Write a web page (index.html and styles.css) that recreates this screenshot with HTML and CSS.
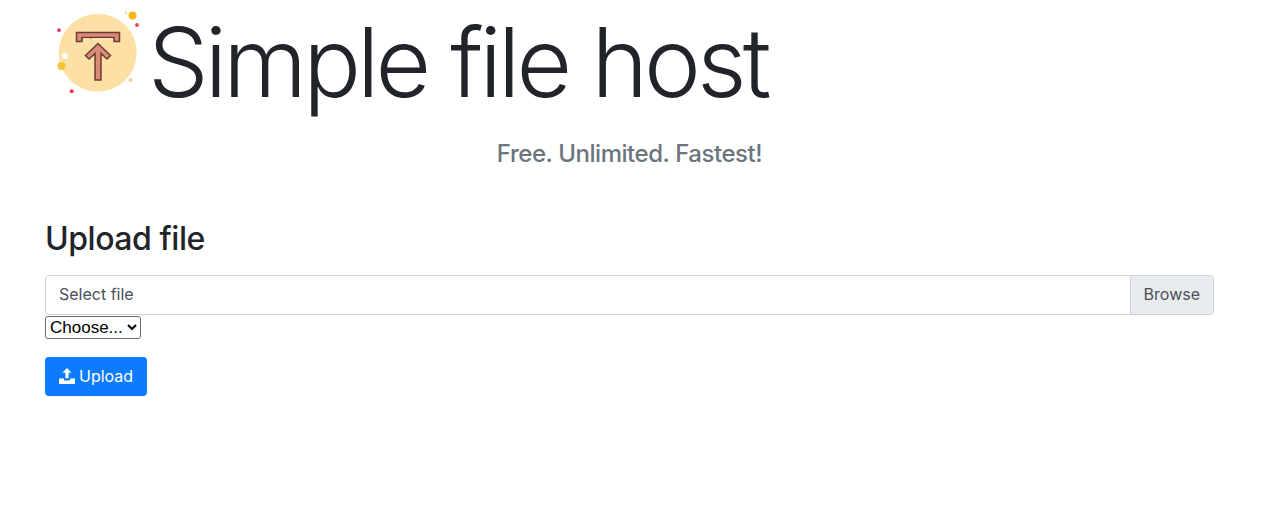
FILE: index.html
```html
<!DOCTYPE html>
<html>

<head>
    <meta charset="UTF-8">
    <title>Simple file host</title>
    <link rel="stylesheet" href="styles.css">
</head>

<body>
<div class="container">
    <h1 class="title">
        <svg class="logo" viewBox="50 8 92 92" width="92" height="92">
            <circle cx="97.700" cy="52.700" r="39" fill="#fde0a6"/>
            <circle cx="132.500" cy="15.500" r="4" fill="#f2b81f"/>
            <circle cx="126" cy="13" r="1.200" fill="#f5d98a"/>
            <circle cx="137" cy="25" r="2" fill="#e8476a"/>
            <circle cx="59" cy="30.300" r="2" fill="#e0457a"/>
            <circle cx="61.500" cy="66" r="4" fill="#f6c435"/>
            <circle cx="65" cy="56" r="3" fill="#fff"/>
            <circle cx="67" cy="70" r="1.200" fill="#f6d88c"/>
            <circle cx="71.700" cy="91.300" r="2" fill="#e8384f"/>
            <circle cx="130.500" cy="80" r="2" fill="#f5d48a"/>
            <path d="M76.500 32.500h43v9h-5.500v-4h-32v4h-5.500z" fill="#d98b78" stroke="#6e3b32" stroke-width="1.500"/>
            <path d="M84 38.800h5M92 38.800h21" fill="none" stroke="#fff3d6" stroke-width="1"/>
            <path d="M98 43.500l12.500 12-3.500 3.500-6-5.500v26.500h-6v-26.500l-6 5.500-3.500-3.500z" fill="#d98b78" stroke="#6e3b32" stroke-width="1.500"/>
        </svg>Simple file host
    </h1>
    <p class="lead">Free. Unlimited. Fastest!</p>

    <h3 class="upload-title">Upload file</h3>
    <div class="file-group">
        <div class="file-label">Select file</div>
        <div class="file-browse">Browse</div>
    </div>
    <select class="server-select">
        <option>Choose...</option>
    </select>
    <div>
        <button class="btn-upload">
            <svg class="icon-upload" viewBox="0 0 16 16" width="16" height="16">
                <path d="M8 0l4.600 4.800H9.600v5.400H6.400V4.800H3.400z" fill="#fff"/>
                <path d="M0 10.600h5v.8c0 .8.500 1.200 1.200 1.200h3.600c.7 0 1.200-.4 1.200-1.200v-.8h5V16H0z" fill="#fff"/>
            </svg>
            Upload
        </button>
    </div>
</div>
</body>

</html>
```

FILE: styles.css
```css
* {
    box-sizing: border-box;
}

body {
    margin: 0;
    font-family: Inter, "Liberation Sans", sans-serif;
    color: #212529;
    background: #fff;
}

.container {
    width: 1260px;
    padding: 0 46px 0 45px;
}

.title {
    display: flex;
    align-items: flex-start;
    height: 124px;
    margin: 0;
    padding-left: 5px;
    font-size: 96px;
    font-weight: 300;
    line-height: 124px;
    letter-spacing: -3.900px;
    white-space: nowrap;
}

.logo {
    flex: none;
    margin: 8px 6px 0 0;
}

.lead {
    margin: 14px 0 0;
    font-size: 24px;
    font-weight: 500;
    line-height: 32px;
    letter-spacing: -0.450px;
    text-align: center;
    color: #6c757d;
}

.upload-title {
    margin: 49px 0 0;
    font-size: 32px;
    font-weight: 500;
    line-height: 40px;
    letter-spacing: -0.450px;
}

.file-group {
    display: flex;
    width: 1169px;
    height: 39.500px;
    margin-top: 16px;
    border: 1px solid #d0d3d6;
    border-radius: 4px;
    font-size: 16px;
    line-height: 37.500px;
    color: #495057;
}

.file-label {
    flex: 1;
    padding-left: 13px;
}

.file-browse {
    padding: 0 13px;
    background: #e9ecef;
    border-left: 1px solid #d0d3d6;
    border-radius: 0 3px 3px 0;
}

.server-select {
    display: block;
    width: 96px;
    height: 23px;
    margin-top: 1px;
    font-family: "Liberation Sans", sans-serif;
    font-size: 17px;
    color: #000;
    background: #fff;
    border: 1px solid #6b6b6b;
    border-radius: 3px;
}

.btn-upload {
    display: flex;
    align-items: center;
    gap: 4px;
    height: 39.500px;
    margin-top: 18px;
    padding: 0 14px;
    font-family: inherit;
    font-size: 16px;
    color: #fff;
    background: #0d7bfd;
    border: 0;
    border-radius: 4px;
}
```
